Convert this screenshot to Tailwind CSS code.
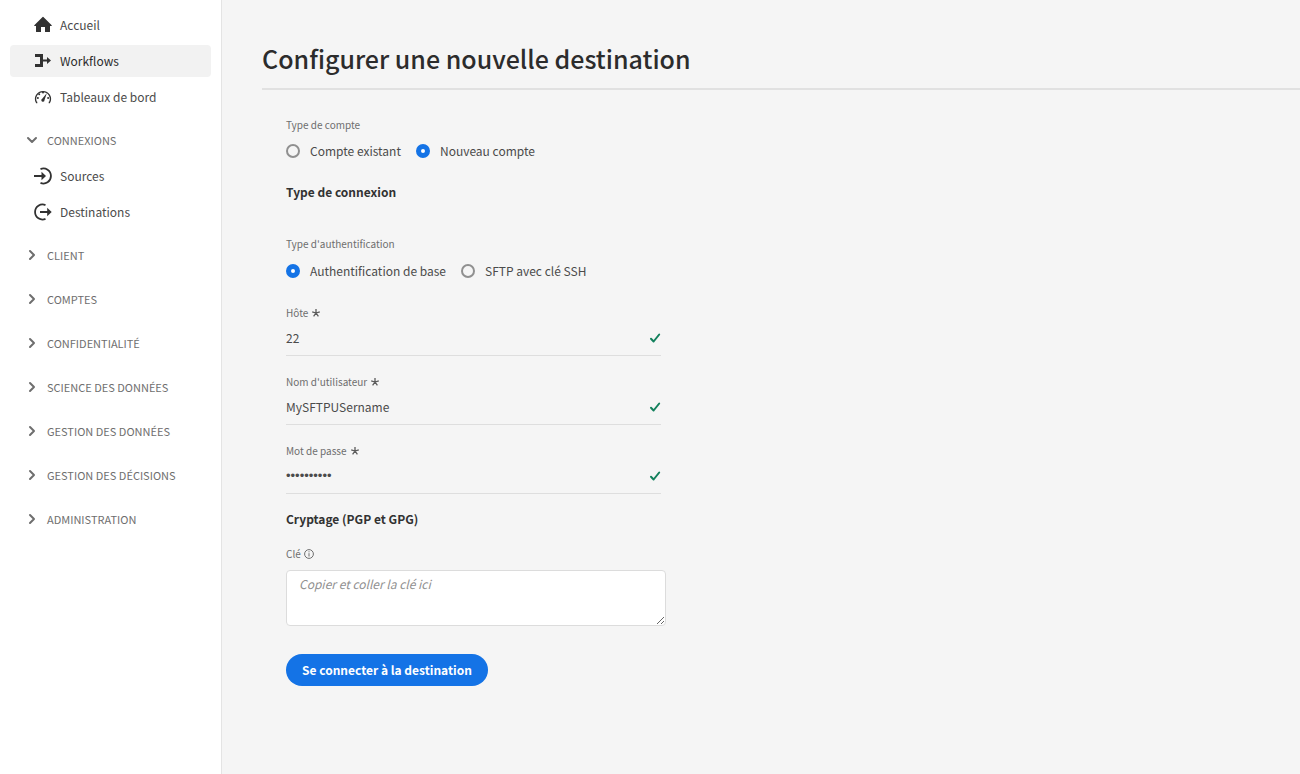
<!DOCTYPE html>
<html lang="fr">
<head>
<meta charset="utf-8">
<meta name="viewport" content="width=device-width, initial-scale=1">
<title>Configurer une nouvelle destination</title>
<script src="https://cdn.jsdelivr.net/npm/@tailwindcss/browser@4"></script>
</head>
<body class="flex min-h-screen bg-[#f5f5f5] font-['Noto_Sans_CJK_SC',sans-serif] text-[12px] leading-5 text-[#4b4b4b]">
  <nav class="w-[222px] shrink-0 border-r border-[#e4e4e4] bg-white px-[10px] pt-[9px]" aria-label="Navigation principale">
    <ul class="flex flex-col gap-1">
      <li><a href="#" class="flex h-8 items-center gap-2 rounded pl-6">
        <svg class="size-[18px]" viewBox="0 0 18 18" fill="#323232"><path d="M17.7 9.2 9.4.9a.6.6 0 0 0-.8 0L.3 9.2c-.4.4-.2.8.3.8H2v5.400c0 .4.2.6.6.6H7v-5h4v5h4.400c.4 0 .6-.2.6-.6V10h1.400c.5 0 .7-.4.3-.8z"/></svg>
        Accueil</a></li>
      <li><a href="#" aria-current="page" class="flex h-8 items-center gap-2 rounded bg-[#f2f2f2] pl-6 text-[#2c2c2c]">
        <svg class="size-[18px]" viewBox="0 0 18 18" fill="#323232"><path d="M1 2h8v5.500h4V5l4 3.500-4 3.500V9.500H9V15H1v-3h5V5H1z"/></svg>
        Workflows</a></li>
      <li><a href="#" class="flex h-8 items-center gap-2 rounded pl-6">
        <svg class="size-[18px]" viewBox="0 0 18 18" fill="none" stroke="#323232"><path stroke-width="1.300" d="M3.300 14.500H2.500A7.400 7.400 0 1 1 15.500 14.500h-.8"/><g fill="#323232" stroke="none"><circle cx="3.900" cy="10" r="1"/><circle cx="5.200" cy="6.200" r="1"/><circle cx="9" cy="4.500" r="1"/><circle cx="14.100" cy="10" r="1"/><path d="M12.900 5.100 10.500 12a1.600 1.600 0 1 1-2.300-1.300z"/></g></svg>
        Tableaux de bord</a></li>
    </ul>

    <button type="button" aria-expanded="true" class="mt-[11px] flex h-8 w-full items-center gap-[9px] pl-4 text-[11px] text-[#6e6e6e]">
      <svg class="size-3" viewBox="0 0 12 12" fill="none" stroke="#6e6e6e" stroke-width="2" stroke-linecap="round" stroke-linejoin="round"><path d="m2 4 4 4 4-4"/></svg>
      CONNEXIONS</button>
    <ul class="mt-1 flex flex-col gap-1">
      <li><a href="#" class="flex h-8 items-center gap-2 rounded pl-6">
        <svg class="size-[18px]" viewBox="0 0 18 18" fill="none" stroke="#323232" stroke-width="1.800"><path d="M6.500 2.100A7.500 7.500 0 1 1 6.500 15.900M0 9h9"/><path fill="#323232" stroke="none" d="M7.500 4.800 12 9l-4.500 4.200z"/></svg>
        Sources</a></li>
      <li><a href="#" class="flex h-8 items-center gap-2 rounded pl-6">
        <svg class="size-[18px]" viewBox="0 0 18 18" fill="none" stroke="#323232" stroke-width="1.800"><path d="M11.500 2.100A7.500 7.500 0 1 0 11.500 15.900M6 9h8.500"/><path fill="#323232" stroke="none" d="M13.200 4.800 17.700 9l-4.500 4.200z"/></svg>
        Destinations</a></li>
    </ul>

    <ul class="mt-[11px] flex flex-col gap-3 text-[11px] text-[#6e6e6e]">
      <li><button type="button" aria-expanded="false" class="flex h-8 w-full items-center gap-[9px] pl-4"><svg class="size-3" viewBox="0 0 12 12" fill="none" stroke="#6e6e6e" stroke-width="2" stroke-linecap="round" stroke-linejoin="round"><path d="m4 2 4 4-4 4"/></svg>CLIENT</button></li>
      <li><button type="button" aria-expanded="false" class="flex h-8 w-full items-center gap-[9px] pl-4"><svg class="size-3" viewBox="0 0 12 12" fill="none" stroke="#6e6e6e" stroke-width="2" stroke-linecap="round" stroke-linejoin="round"><path d="m4 2 4 4-4 4"/></svg>COMPTES</button></li>
      <li><button type="button" aria-expanded="false" class="flex h-8 w-full items-center gap-[9px] pl-4"><svg class="size-3" viewBox="0 0 12 12" fill="none" stroke="#6e6e6e" stroke-width="2" stroke-linecap="round" stroke-linejoin="round"><path d="m4 2 4 4-4 4"/></svg>CONFIDENTIALITÉ</button></li>
      <li><button type="button" aria-expanded="false" class="flex h-8 w-full items-center gap-[9px] pl-4"><svg class="size-3" viewBox="0 0 12 12" fill="none" stroke="#6e6e6e" stroke-width="2" stroke-linecap="round" stroke-linejoin="round"><path d="m4 2 4 4-4 4"/></svg>SCIENCE DES DONNÉES</button></li>
      <li><button type="button" aria-expanded="false" class="flex h-8 w-full items-center gap-[9px] pl-4"><svg class="size-3" viewBox="0 0 12 12" fill="none" stroke="#6e6e6e" stroke-width="2" stroke-linecap="round" stroke-linejoin="round"><path d="m4 2 4 4-4 4"/></svg>GESTION DES DONNÉES</button></li>
      <li><button type="button" aria-expanded="false" class="flex h-8 w-full items-center gap-[9px] pl-4"><svg class="size-3" viewBox="0 0 12 12" fill="none" stroke="#6e6e6e" stroke-width="2" stroke-linecap="round" stroke-linejoin="round"><path d="m4 2 4 4-4 4"/></svg>GESTION DES DÉCISIONS</button></li>
      <li><button type="button" aria-expanded="false" class="flex h-8 w-full items-center gap-[9px] pl-4"><svg class="size-3" viewBox="0 0 12 12" fill="none" stroke="#6e6e6e" stroke-width="2" stroke-linecap="round" stroke-linejoin="round"><path d="m4 2 4 4-4 4"/></svg>ADMINISTRATION</button></li>
    </ul>
  </nav>

  <main class="min-w-0 flex-1 pl-10 pt-10">
    <h1 class="border-b-2 border-[#e1e1e1] pb-3 text-[25px] leading-9 font-medium text-[#2c2c2c]">Configurer une nouvelle destination</h1>

    <form class="pl-6 pt-[27px]">
      <fieldset>
        <legend class="text-[10px] leading-4 text-[#6e6e6e]">Type de compte</legend>
        <div class="mt-2 flex gap-[15px]">
          <label class="flex items-center gap-[10px]"><input type="radio" name="compte" class="size-[14px] appearance-none rounded-full border-2 border-[#909090] checked:border-5 checked:border-[#1473e6] checked:bg-white">Compte existant</label>
          <label class="flex items-center gap-[10px]"><input type="radio" name="compte" checked class="size-[14px] appearance-none rounded-full border-2 border-[#909090] checked:border-5 checked:border-[#1473e6] checked:bg-white">Nouveau compte</label>
        </div>
      </fieldset>

      <h2 class="mt-[21px] font-bold text-[#323232]">Type de connexion</h2>

      <fieldset class="mt-[34px]">
        <legend class="text-[10px] leading-4 text-[#6e6e6e]">Type d'authentification</legend>
        <div class="mt-[9px] flex gap-[15px]">
          <label class="flex items-center gap-[10px]"><input type="radio" name="auth" checked class="size-[14px] appearance-none rounded-full border-2 border-[#909090] checked:border-5 checked:border-[#1473e6] checked:bg-white">Authentification de base</label>
          <label class="flex items-center gap-[10px]"><input type="radio" name="auth" class="size-[14px] appearance-none rounded-full border-2 border-[#909090] checked:border-5 checked:border-[#1473e6] checked:bg-white">SFTP avec clé SSH</label>
        </div>
      </fieldset>

      <div class="mt-6 flex max-w-[375px] flex-col gap-[18px]">
        <div>
          <label for="host" class="flex items-center gap-1 text-[10px] leading-4 text-[#6e6e6e]">Hôte
            <svg class="size-2" viewBox="0 0 8 8" stroke="#5a5a5a" stroke-width="1.300"><path d="M4 4V0M4 4 .2 2.800M4 4l3.800-1.200M4 4 1.600 7.400M4 4l2.400 3.400"/></svg></label>
          <div class="flex h-[35px] items-center border-b border-[#dedede]">
            <input id="host" type="text" required value="22" class="min-w-0 flex-1 bg-transparent outline-none">
            <svg class="size-3" viewBox="0 0 12 12" fill="none" stroke="#12805c" stroke-width="2" stroke-linecap="round" stroke-linejoin="round"><path d="M2 6.800 4.600 9.500 10.200 2.500"/></svg>
          </div>
        </div>
        <div>
          <label for="user" class="flex items-center gap-1 text-[10px] leading-4 text-[#6e6e6e]">Nom d'utilisateur
            <svg class="size-2" viewBox="0 0 8 8" stroke="#5a5a5a" stroke-width="1.300"><path d="M4 4V0M4 4 .2 2.800M4 4l3.800-1.200M4 4 1.600 7.400M4 4l2.400 3.400"/></svg></label>
          <div class="flex h-[35px] items-center border-b border-[#dedede]">
            <input id="user" type="text" required value="MySFTPUSername" class="min-w-0 flex-1 bg-transparent outline-none">
            <svg class="size-3" viewBox="0 0 12 12" fill="none" stroke="#12805c" stroke-width="2" stroke-linecap="round" stroke-linejoin="round"><path d="M2 6.800 4.600 9.500 10.200 2.500"/></svg>
          </div>
        </div>
        <div>
          <label for="password" class="flex items-center gap-1 text-[10px] leading-4 text-[#6e6e6e]">Mot de passe
            <svg class="size-2" viewBox="0 0 8 8" stroke="#5a5a5a" stroke-width="1.300"><path d="M4 4V0M4 4 .2 2.800M4 4l3.800-1.200M4 4 1.600 7.400M4 4l2.400 3.400"/></svg></label>
          <div class="flex h-[35px] items-center border-b border-[#dedede]">
            <input id="password" type="password" required value="motdepasse" class="min-w-0 flex-1 bg-transparent font-['Liberation_Sans',sans-serif] text-[13px] outline-none">
            <svg class="size-3" viewBox="0 0 12 12" fill="none" stroke="#12805c" stroke-width="2" stroke-linecap="round" stroke-linejoin="round"><path d="M2 6.800 4.600 9.500 10.200 2.500"/></svg>
          </div>
        </div>
      </div>

      <h2 class="mt-[15px] font-bold text-[#323232]">Cryptage (PGP et GPG)</h2>

      <label for="key" class="mt-[17px] flex items-center gap-[3px] text-[10px] leading-4 text-[#6e6e6e]">Clé
        <svg class="size-[10px]" viewBox="0 0 10 10" fill="none" stroke="#6e6e6e"><circle cx="5" cy="5" r="4.400"/><path d="M5 4.200V7.500M5 2.300v1"/></svg></label>
      <textarea id="key" placeholder="Copier et coller la clé ici" class="mt-2 block h-14 w-full max-w-[380px] resize rounded border border-[#dcdcdc] bg-white px-3 py-[3px] outline-none placeholder:text-[#909090] placeholder:italic"></textarea>

      <button type="submit" class="mt-7 h-8 rounded-full bg-[#1473e6] px-4 font-bold text-white">Se connecter à la destination</button>
    </form>
  </main>
</body>
</html>
